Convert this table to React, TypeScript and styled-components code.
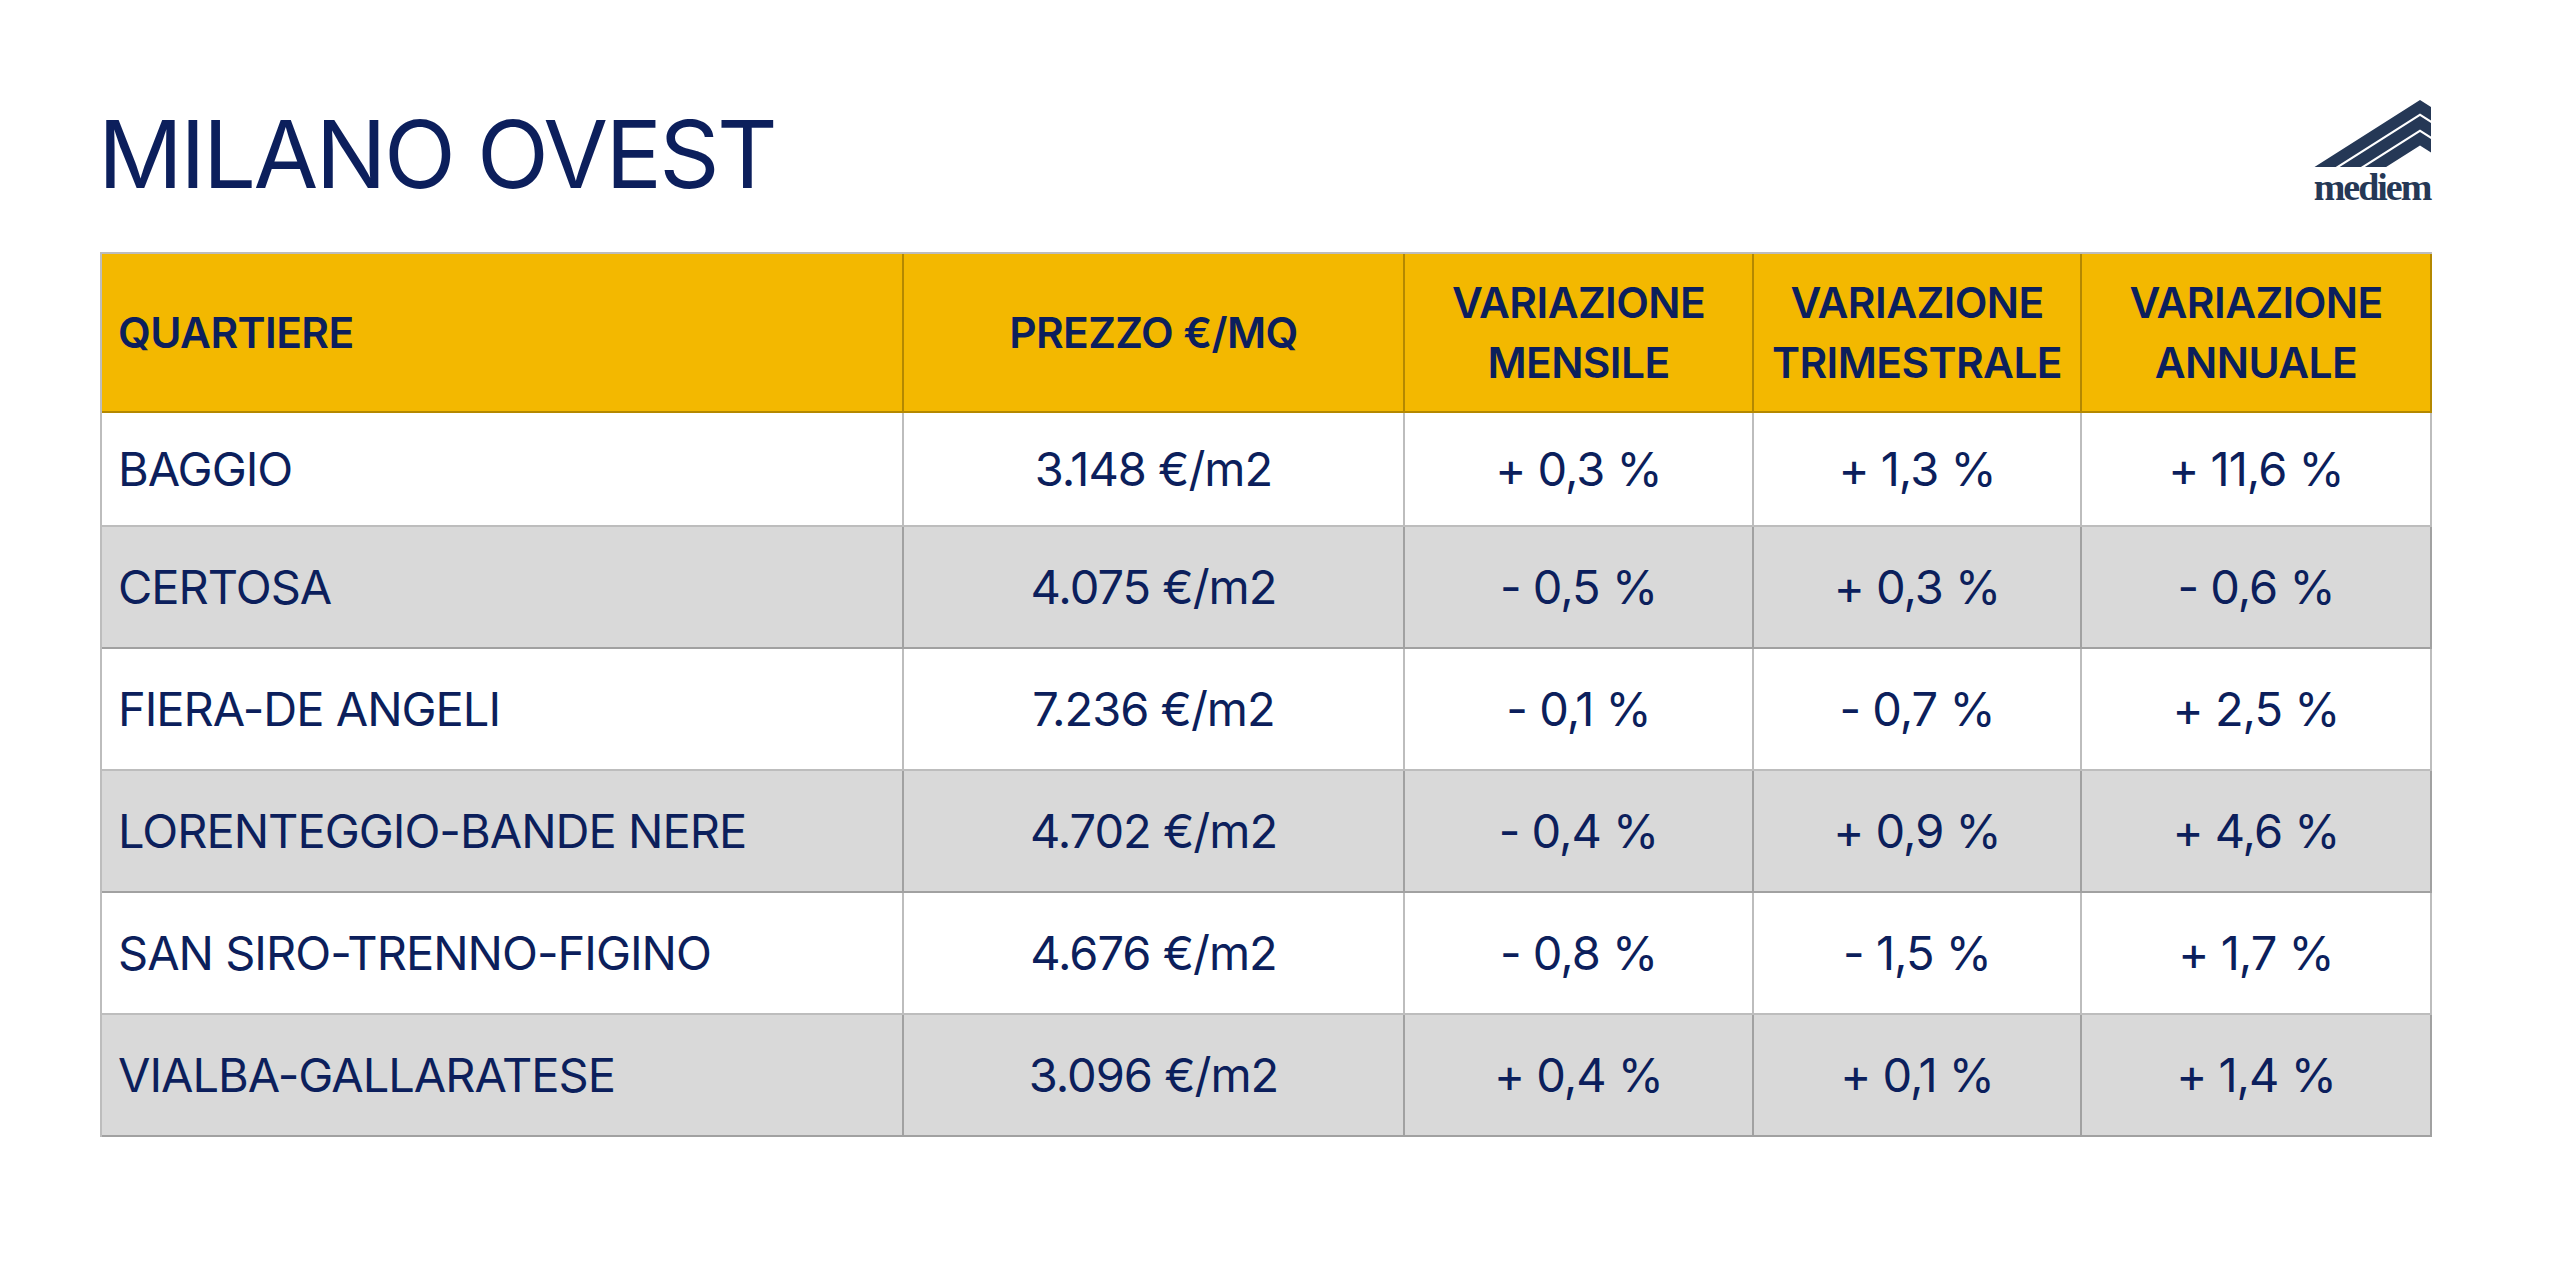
import React from "react";
import styled, { createGlobalStyle } from "styled-components";

const GlobalStyle = createGlobalStyle`
    html, body {
        margin: 0;
        padding: 0;
        background: #fff;
    }
    body {
        font-family: Inter, "Noto Sans", sans-serif;
        color: #0c1f5c;
    }
`

const NAVY = '#0c1f5c'
const LINE = 'rgba(0, 0, 0, 0.26)'
const COLS = '802px 501px 349px 328px 350px'

const Page = styled.div`
    width: 2560px;
    height: 1280px;
    box-sizing: border-box;
    padding: 99px 128px 0 100px;
    overflow: hidden;
`

const TopBar = styled.header`
    height: 153px;
    display: flex;
    justify-content: space-between;
    align-items: flex-start;
`

const Title = styled.h1`
    margin: 8px 0 0 -2px;
    font-family: Inter, "Noto Sans", sans-serif;
    font-weight: 400;
    font-size: 94px;
    line-height: 94px;
    letter-spacing: -2.6px;
    color: ${NAVY};
`

const Logo = styled.div`
    width: 120px;
    display: flex;
    flex-direction: column;
    align-items: center;
    color: #253856;
`

const Wordmark = styled.span`
    margin-top: 2px;
    font-family: "Liberation Serif", "DejaVu Serif", serif;
    font-weight: 700;
    font-size: 38px;
    line-height: 37px;
    letter-spacing: -2px;
`

const Table = styled.div`
    width: 2332px;
    border-top: 2px solid ${LINE};
    border-left: 2px solid ${LINE};
    box-sizing: border-box;
`

const Row = styled.div<{ $head?: boolean; $shade?: boolean }>`
    display: grid;
    grid-template-columns: ${COLS};
    height: ${p => (p.$head ? '159px' : '122px')};
    background: ${p => (p.$head ? '#f3b800' : p.$shade ? '#d9d9d9' : '#fff')};
    &:nth-child(2) {
        height: 114px;
    }
`

const Cell = styled.div<{ $left?: boolean; $head?: boolean }>`
    box-sizing: border-box;
    border-right: 2px solid ${LINE};
    border-bottom: 2px solid ${LINE};
    display: flex;
    align-items: center;
    justify-content: ${p => (p.$left ? 'flex-start' : 'center')};
    text-align: ${p => (p.$left ? 'left' : 'center')};
    padding: ${p => (p.$left ? '0 0 0 16px' : '0')};
    font-size: ${p => (p.$head ? '42.5px' : '47px')};
    font-weight: ${p => (p.$head ? 600 : 400)};
    line-height: ${p => (p.$head ? '60px' : '56px')};
    letter-spacing: ${p => (p.$head ? '-0.6px' : '-1px')};
    color: ${NAVY};
`

const headers = [
    'QUARTIERE',
    'PREZZO €/MQ',
    'VARIAZIONE\nMENSILE',
    'VARIAZIONE\nTRIMESTRALE',
    'VARIAZIONE\nANNUALE',
]

const rows = [
    ['BAGGIO', '3.148 €/m2', '+ 0,3 %', '+ 1,3 %', '+ 11,6 %'],
    ['CERTOSA', '4.075 €/m2', '- 0,5 %', '+ 0,3 %', '- 0,6 %'],
    ['FIERA-DE ANGELI', '7.236 €/m2', '- 0,1 %', '- 0,7 %', '+ 2,5 %'],
    ['LORENTEGGIO-BANDE NERE', '4.702 €/m2', '- 0,4 %', '+ 0,9 %', '+ 4,6 %'],
    ['SAN SIRO-TRENNO-FIGINO', '4.676 €/m2', '- 0,8 %', '- 1,5 %', '+ 1,7 %'],
    ['VIALBA-GALLARATESE', '3.096 €/m2', '+ 0,4 %', '+ 0,1 %', '+ 1,4 %'],
]

// roof-shaped stripes of the logo, clipped to the mark's box
function band(a: number, b: number) {
    const s = 0.635
    const apex = 107
    const right = 118
    const bottom = 68
    const rise = (right - apex) * s
    const pts = [
        [apex - (bottom - a) / s, bottom],
        [apex, a],
        [right, a + rise],
        [right, b + rise],
        [apex, b],
        [apex - (bottom - b) / s, bottom],
    ]
    return pts.map(p => p.map(n => n.toFixed(1)).join(',')).join(' ')
}

function MediemLogo() {
    return (
        <Logo>
            <svg width="118" height="68" viewBox="0 0 118 68">
                <polygon points={band(1, 14.5)} fill="currentColor" />
                <polygon points={band(17, 30.5)} fill="currentColor" />
                <polygon points={band(33, 46.5)} fill="currentColor" />
            </svg>
            <Wordmark>mediem</Wordmark>
        </Logo>
    )
}

function Lines({ text }: { text: string }) {
    const parts = text.split('\n')
    return (
        <span>
            {parts.map((t, i) => (
                <React.Fragment key={i}>
                    {i > 0 && <br />}
                    {t}
                </React.Fragment>
            ))}
        </span>
    )
}

export default function App() {
    return (
        <>
            <GlobalStyle />
            <Page>
                <TopBar>
                    <Title>MILANO OVEST</Title>
                    <MediemLogo />
                </TopBar>
                <Table>
                    <Row $head>
                        {headers.map((h, i) => (
                            <Cell key={h} $head $left={i === 0}>
                                <Lines text={h} />
                            </Cell>
                        ))}
                    </Row>
                    {rows.map((r, ri) => (
                        <Row key={r[0]} $shade={ri % 2 === 1}>
                            {r.map((c, ci) => (
                                <Cell key={ci} $left={ci === 0}>{c}</Cell>
                            ))}
                        </Row>
                    ))}
                </Table>
            </Page>
        </>
    )
}
